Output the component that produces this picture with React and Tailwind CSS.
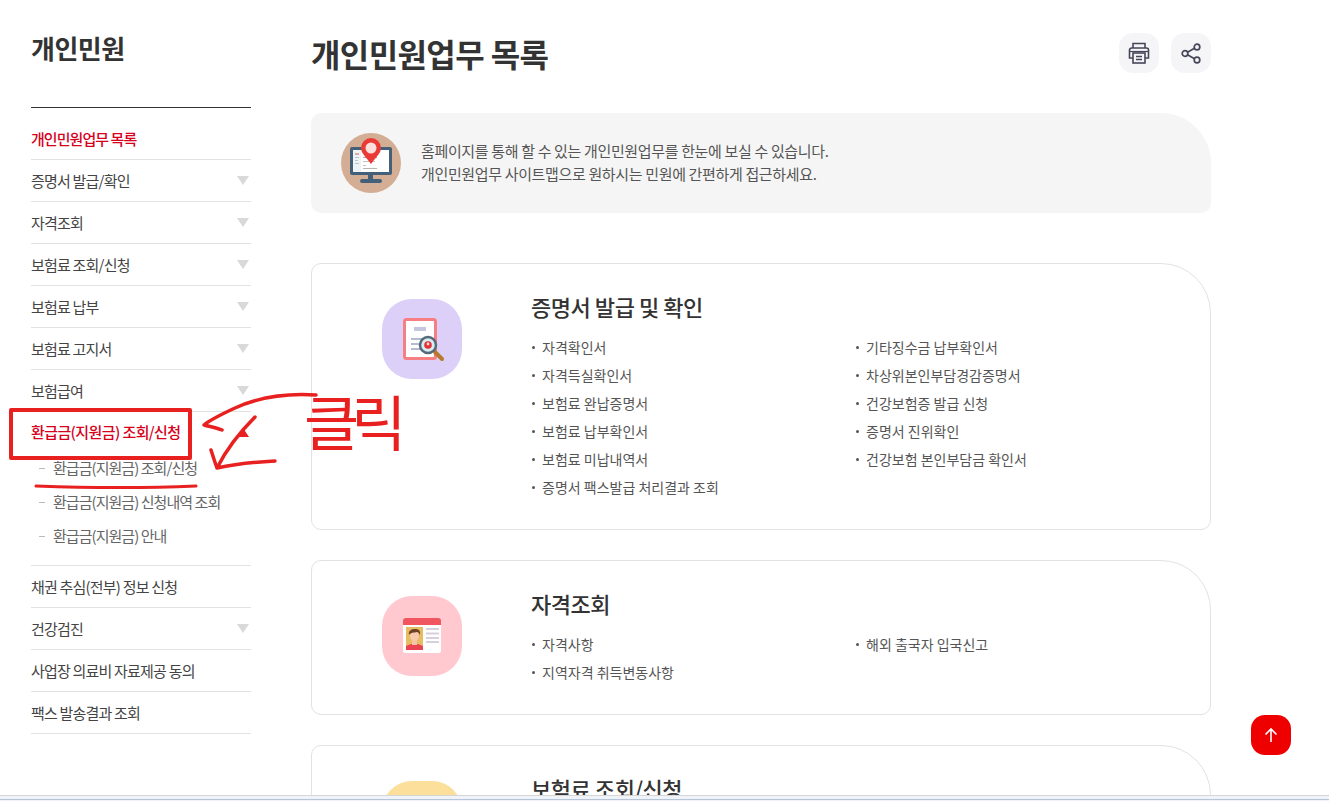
import React from 'react';

const menu = [
  { label: '증명서 발급/확인', arrow: true },
  { label: '자격조회', arrow: true },
  { label: '보험료 조회/신청', arrow: true },
  { label: '보험료 납부', arrow: true },
  { label: '보험료 고지서', arrow: true },
  { label: '보험급여', arrow: true },
];

const menuAfter = [
  { label: '채권 추심(전부) 정보 신청' },
  { label: '건강검진', arrow: true },
  { label: '사업장 의료비 자료제공 동의' },
  { label: '팩스 발송결과 조회' },
];

const subMenu = ['환급금(지원금) 조회/신청', '환급금(지원금) 신청내역 조회', '환급금(지원금) 안내'];

const cards = [
  {
    title: '증명서 발급 및 확인',
    tile: 'bg-[#dcd0f8]',
    icon: 'doc',
    left: ['자격확인서', '자격득실확인서', '보험료 완납증명서', '보험료 납부확인서', '보험료 미납내역서', '증명서 팩스발급 처리결과 조회'],
    right: ['기타징수금 납부확인서', '차상위본인부담경감증명서', '건강보험증 발급 신청', '증명서 진위확인', '건강보험 본인부담금 확인서'],
  },
  {
    title: '자격조회',
    tile: 'bg-[#ffc9cf]',
    icon: 'id',
    left: ['자격사항', '지역자격 취득변동사항'],
    right: ['해외 출국자 입국신고'],
  },
  {
    title: '보험료 조회/신청',
    tile: 'bg-[#fddf9c]',
    left: [],
    right: [],
  },
];

const Arrow = () => (
  <svg width="12" height="9" viewBox="0 0 12 9" className="shrink-0 mr-[2px] -mt-[2px]">
    <path d="M0 0h12L6 9z" fill="#d9d9d9" />
  </svg>
);

const DocIcon = () => (
  <svg width="42" height="44" viewBox="0 0 42 44" className="ml-[3px] mt-[1px]">
    <rect x="1.5" y="1.5" width="31" height="39" rx="2" fill="#fff" stroke="#f57f82" strokeWidth="3" />
    <rect x="11" y="9" width="12" height="4" fill="#c3c8de" />
    <rect x="8" y="20" width="16" height="2" fill="#b5bcd2" />
    <rect x="8" y="25" width="12" height="2" fill="#b5bcd2" />
    <rect x="8" y="30" width="12" height="2" fill="#b5bcd2" />
    <path d="M32 34l7 7" stroke="#b57a2c" strokeWidth="4" strokeLinecap="round" />
    <circle cx="25" cy="27" r="8" fill="#d7ecef" stroke="#55697a" strokeWidth="2.5" />
    <circle cx="25" cy="27" r="3.8" fill="#e62f35" />
    <circle cx="25" cy="26" r="1.4" fill="#fbe0e0" />
  </svg>
);

const IdIcon = () => (
  <svg width="40" height="36" viewBox="0 0 40 36">
    <path d="M0 7V3a3 3 0 0 1 3-3h32a3 3 0 0 1 3 3v4z" fill="#f0565f" transform="translate(1 0)" />
    <path d="M1 7h38v26a2 2 0 0 1-2 2H3a2 2 0 0 1-2-2z" fill="#fff" />
    <rect x="4" y="9" width="17" height="23" fill="#e6bd62" />
    <path d="M4 32v-4l5-2h7l5 2v4z" fill="#ea4352" />
    <rect x="10" y="20" width="5" height="7" fill="#f6c3a5" />
    <ellipse cx="12.5" cy="18" rx="4.5" ry="5" fill="#f8c9ac" />
    <path d="M7 17c-1-5 3-6 6-6s6 1 5 6c-1-2-2-3-3-3-3 1-6 0-8 3z" fill="#6e4124" />
    <rect x="24" y="10" width="13" height="2" fill="#d8cfdc" />
    <rect x="24" y="14.5" width="13" height="2" fill="#d8cfdc" />
    <rect x="24" y="19" width="13" height="2" fill="#d8cfdc" />
    <rect x="24" y="23" width="13" height="2" fill="#d8cfdc" />
  </svg>
);

const MonitorIcon = () => (
  <svg width="60" height="60" viewBox="0 0 60 60" className="shrink-0">
    <circle cx="30" cy="30" r="30" fill="#d3ae94" />
    <rect x="9" y="14" width="42" height="28" rx="2" fill="#446078" />
    <rect x="12" y="17" width="36" height="22" fill="#fff" />
    <rect x="12" y="17" width="8" height="22" fill="#eef3f6" />
    <rect x="14" y="20" width="4" height="2" fill="#dca7a5" />
    <rect x="14" y="24" width="4" height="1" fill="#b9c7d0" />
    <rect x="14" y="27" width="3" height="1" fill="#b9c7d0" />
    <rect x="14" y="30" width="4" height="1" fill="#b9c7d0" />
    <rect x="22" y="24" width="14" height="1" fill="#a9a9a9" />
    <rect x="22" y="28" width="12" height="1" fill="#c3c3c3" />
    <rect x="22" y="32" width="3" height="1" fill="#c3c3c3" />
    <rect x="22" y="35" width="14" height="1" fill="#b5b5b5" />
    <rect x="27" y="42" width="5" height="5" fill="#446078" />
    <rect x="19" y="46" width="22" height="4" rx="2" fill="#446078" />
    <path d="M30 31C25 24 20 20 20 15a10 10 0 0 1 20 0c0 5-5 9-10 16z" fill="#e93a35" />
    <circle cx="30" cy="15" r="5.5" fill="#fbdfdc" />
  </svg>
);

const Bullet = ({ text }) => (
  <li className="h-[28px] flex items-center text-[14px] text-[#555] tracking-[0px]">
    <span className="w-[3px] h-[3px] rounded-full bg-[#555] mr-[7px] ml-[1px]" />
    {text}
  </li>
);

const Card = ({ card }) => (
  <div className="border border-[#e2e2e2] rounded-[10px] rounded-tr-[50px] pl-[70px] pt-[35px] pb-[28px] flex">
    <div className={`w-[80px] h-[80px] rounded-[30px] flex items-center justify-center shrink-0 ${card.tile}`}>
      {card.icon === 'doc' && <DocIcon />}
      {card.icon === 'id' && <IdIcon />}
    </div>
    <div className="ml-[69px] flex-1">
      <h3 className="text-[22px] leading-[20px] font-medium text-[#333] tracking-[-0.45px] -mt-[3px] mb-[17px]">{card.title}</h3>
      <div className="flex">
        <ul className="w-[324px]">
          {card.left.map((t) => <Bullet key={t} text={t} />)}
        </ul>
        <ul>
          {card.right.map((t) => <Bullet key={t} text={t} />)}
        </ul>
      </div>
    </div>
  </div>
);

export default function App() {
  return (
    <div
      className="relative w-[1329px] h-[801px] overflow-hidden bg-white"
      style={{ fontFamily: '"Noto Sans CJK KR", "Noto Sans", sans-serif' }}
    >
      <div className="flex pl-[31px]">
        {/* Sidebar */}
        <aside className="w-[220px] shrink-0">
          <h2 className="text-[26px] leading-[38px] font-bold text-[#333] tracking-[-0.5px] pt-[29px] h-[107px]">개인민원</h2>
          <ul className="border-t border-[#333] pt-[10px] text-[15px] text-[#444] tracking-[-0.8px]">
            <li className="h-[42px] pt-[2px] flex items-center border-b border-[#e2e2e2] text-[#d6001c] font-medium tracking-[-0.95px]">개인민원업무 목록</li>
            {menu.map((m) => (
              <li key={m.label} className="h-[42px] pt-[2px] flex items-center justify-between border-b border-[#e2e2e2]">
                {m.label}
                <Arrow />
              </li>
            ))}
            <li className="border-b border-[#e2e2e2] pb-[11px]">
              <div className="h-[40px] flex items-center justify-between text-[#d6001c] font-medium tracking-[-0.6px]">
                환급금(지원금) 조회/신청
                <svg width="12" height="9" viewBox="0 0 12 9" className="shrink-0 mr-[2px]">
                  <path d="M0 9h12L6 0z" fill="#e8201f" />
                </svg>
              </div>
              {subMenu.map((s) => (
                <div key={s} className="h-[34px] pb-[2px] flex items-center text-[#666] pl-[8px] tracking-[-0.95px]">
                  <span className="w-[6px] h-[1px] bg-[#bbb] mr-[8px]" />
                  {s}
                </div>
              ))}
            </li>
            {menuAfter.map((m) => (
              <li key={m.label} className="h-[42px] pt-[2px] flex items-center justify-between border-b border-[#e2e2e2]">
                {m.label}
                {m.arrow && <Arrow />}
              </li>
            ))}
          </ul>
        </aside>

        {/* Main */}
        <main className="w-[900px] ml-[60px] shrink-0">
          <div className="flex items-start justify-between pt-[33px] h-[113px]">
            <h1 className="text-[32px] leading-[40px] font-bold text-[#333] tracking-[-0.6px]">개인민원업무 목록</h1>
            <div className="flex gap-[12px]">
              <button className="w-[40px] h-[40px] rounded-[14px] bg-[#f5f5f7] flex items-center justify-center">
                <svg width="24" height="24" viewBox="0 0 24 24" fill="none" stroke="#46465a" strokeWidth="1.6">
                  <path d="M6 7V2.5h12V7" />
                  <path d="M6 17H2.5V9a2 2 0 0 1 2-2h15a2 2 0 0 1 2 2v8H18" />
                  <path d="M3 10.5h18" strokeWidth="1.2" />
                  <rect x="6" y="12" width="12" height="10" fill="#f5f5f7" />
                  <path d="M9 15.5h6M9 18.5h6" strokeWidth="1.3" />
                </svg>
              </button>
              <button className="w-[40px] h-[40px] rounded-[14px] bg-[#f5f5f7] flex items-center justify-center">
                <svg width="22" height="22" viewBox="0 0 22 22" fill="none" stroke="#46465a" strokeWidth="1.7">
                  <circle cx="17" cy="5" r="2.8" />
                  <circle cx="5" cy="11.5" r="2.8" />
                  <circle cx="17" cy="18" r="2.8" />
                  <path d="M7.5 10.2l7-4M7.5 12.8l7 4" />
                </svg>
              </button>
            </div>
          </div>

          <div className="h-[100px] bg-[#f5f5f5] rounded-[10px] rounded-tr-[50px] pl-[30px] flex items-center mb-[50px]">
            <MonitorIcon />
            <p className="ml-[20px] pb-[3px] text-[15px] leading-[23px] text-[#555] tracking-[-0.35px]">
              홈페이지를 통해 할 수 있는 개인민원업무를 한눈에 보실 수 있습니다.
              <br />
              개인민원업무 사이트맵으로 원하시는 민원에 간편하게 접근하세요.
            </p>
          </div>

          <div className="flex flex-col gap-[30px]">
            {cards.map((c) => <Card key={c.title} card={c} />)}
          </div>
        </main>
      </div>

      {/* Back to top */}
      <button className="absolute left-[1251px] top-[715px] w-[40px] h-[40px] rounded-[14px] bg-[#ee0000] flex items-center justify-center">
        <svg width="16" height="16" viewBox="0 0 16 16" fill="none" stroke="#fff" strokeWidth="1.6">
          <path d="M8 15V2M2.5 7.5L8 2l5.5 5.5" />
        </svg>
      </button>

      {/* Hand-drawn annotations */}
      <svg className="absolute left-0 top-0 pointer-events-none" width="1329" height="801" fill="none" stroke="#e8201f" strokeLinecap="round" strokeLinejoin="round">
        <path d="M11 410H190V458H11z" strokeWidth="4" />
        <path d="M36 486C90 488 150 488 196 486" strokeWidth="3" />
        <path d="M316 395C285 393 257 398 235 408C222 414 210 420 204 425C212 427 218 428 222 430" strokeWidth="3.5" />
        <path d="M255 417C240 432 226 450 217 468C214 460 213 456 211 450M217 468C235 464 255 462 275 461" strokeWidth="3.5" />
      </svg>
      <span className="absolute left-[304px] top-[378px] text-[60px] leading-[84px] font-normal text-[#e8201f] tracking-[-8px]">클릭</span>

      {/* Browser window bottom edge */}
      <div className="absolute left-0 right-0 bottom-0 h-[6px] bg-[#f0f3f7] border-t border-[#d5d5d5]">
        <div className="mt-[3px] h-[1px] bg-[#b6c6da]" />
      </div>
    </div>
  );
}
